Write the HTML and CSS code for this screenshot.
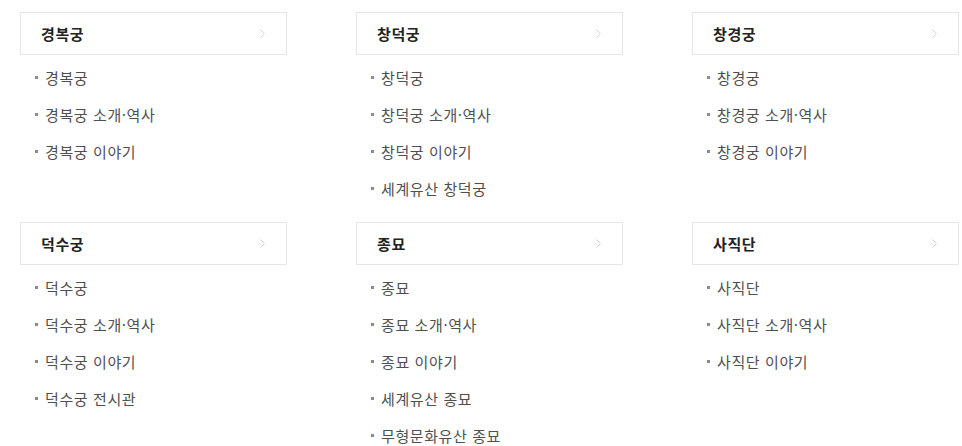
FILE: index.html
```html
<!DOCTYPE html>
<html lang="ko">
<head>
<meta charset="utf-8">
<link rel="stylesheet" href="styles.css">
</head>
<body>
<div class="grid">
  <section class="group">
    <div class="head"><span>경복궁</span><svg class="chev" width="5" height="9" viewBox="0 0 5 9"><polyline points="0.5,0.5 4.5,4.5 0.5,8.5" fill="none" stroke="#d4d4d4" stroke-width="1"/></svg></div>
    <ul class="list">
      <li>경복궁</li>
      <li>경복궁 소개·역사</li>
      <li>경복궁 이야기</li>
    </ul>
  </section>
  <section class="group">
    <div class="head"><span>창덕궁</span><svg class="chev" width="5" height="9" viewBox="0 0 5 9"><polyline points="0.5,0.5 4.5,4.5 0.5,8.5" fill="none" stroke="#d4d4d4" stroke-width="1"/></svg></div>
    <ul class="list">
      <li>창덕궁</li>
      <li>창덕궁 소개·역사</li>
      <li>창덕궁 이야기</li>
      <li>세계유산 창덕궁</li>
    </ul>
  </section>
  <section class="group">
    <div class="head"><span>창경궁</span><svg class="chev" width="5" height="9" viewBox="0 0 5 9"><polyline points="0.5,0.5 4.5,4.5 0.5,8.5" fill="none" stroke="#d4d4d4" stroke-width="1"/></svg></div>
    <ul class="list">
      <li>창경궁</li>
      <li>창경궁 소개·역사</li>
      <li>창경궁 이야기</li>
    </ul>
  </section>
  <section class="group">
    <div class="head"><span>덕수궁</span><svg class="chev" width="5" height="9" viewBox="0 0 5 9"><polyline points="0.5,0.5 4.5,4.5 0.5,8.5" fill="none" stroke="#d4d4d4" stroke-width="1"/></svg></div>
    <ul class="list">
      <li>덕수궁</li>
      <li>덕수궁 소개·역사</li>
      <li>덕수궁 이야기</li>
      <li>덕수궁 전시관</li>
    </ul>
  </section>
  <section class="group">
    <div class="head"><span>종묘</span><svg class="chev" width="5" height="9" viewBox="0 0 5 9"><polyline points="0.5,0.5 4.5,4.5 0.5,8.5" fill="none" stroke="#d4d4d4" stroke-width="1"/></svg></div>
    <ul class="list">
      <li>종묘</li>
      <li>종묘 소개·역사</li>
      <li>종묘 이야기</li>
      <li>세계유산 종묘</li>
      <li>무형문화유산 종묘</li>
    </ul>
  </section>
  <section class="group">
    <div class="head"><span>사직단</span><svg class="chev" width="5" height="9" viewBox="0 0 5 9"><polyline points="0.5,0.5 4.5,4.5 0.5,8.5" fill="none" stroke="#d4d4d4" stroke-width="1"/></svg></div>
    <ul class="list">
      <li>사직단</li>
      <li>사직단 소개·역사</li>
      <li>사직단 이야기</li>
    </ul>
  </section>
</div>
</body>
</html>
```
FILE: styles.css
```css
html, body {
  margin: 0;
  padding: 0;
  background: #fff;
}
body {
  font-family: "Noto Sans CJK KR", "Noto Sans", sans-serif;
  color: #555;
}
.grid {
  display: grid;
  grid-template-columns: repeat(3, 267px);
  column-gap: 69px;
  row-gap: 15px;
  padding: 12px 0 0 20px;
  align-items: start;
}
.head {
  box-sizing: border-box;
  height: 43px;
  border: 1px solid #e6e6e6;
  display: flex;
  align-items: center;
  justify-content: space-between;
  padding: 0 21px 0 20px;
  font-size: 15px;
  font-weight: 700;
  letter-spacing: 0.6px;
  color: #222;
}
.chev {
  display: block;
}
.list {
  list-style: none;
  margin: 0;
  padding: 4px 0 0 0;
}
.list li {
  height: 37px;
  line-height: 37px;
  font-size: 15px;
  letter-spacing: 0.6px;
  color: #4f4f4f;
  display: flex;
  align-items: center;
  padding-left: 15px;
}
.list li::before {
  content: "";
  width: 3px;
  height: 3px;
  background: #8a8a8a;
  margin-right: 7px;
  margin-top: -1px;
  flex: none;
}
```
